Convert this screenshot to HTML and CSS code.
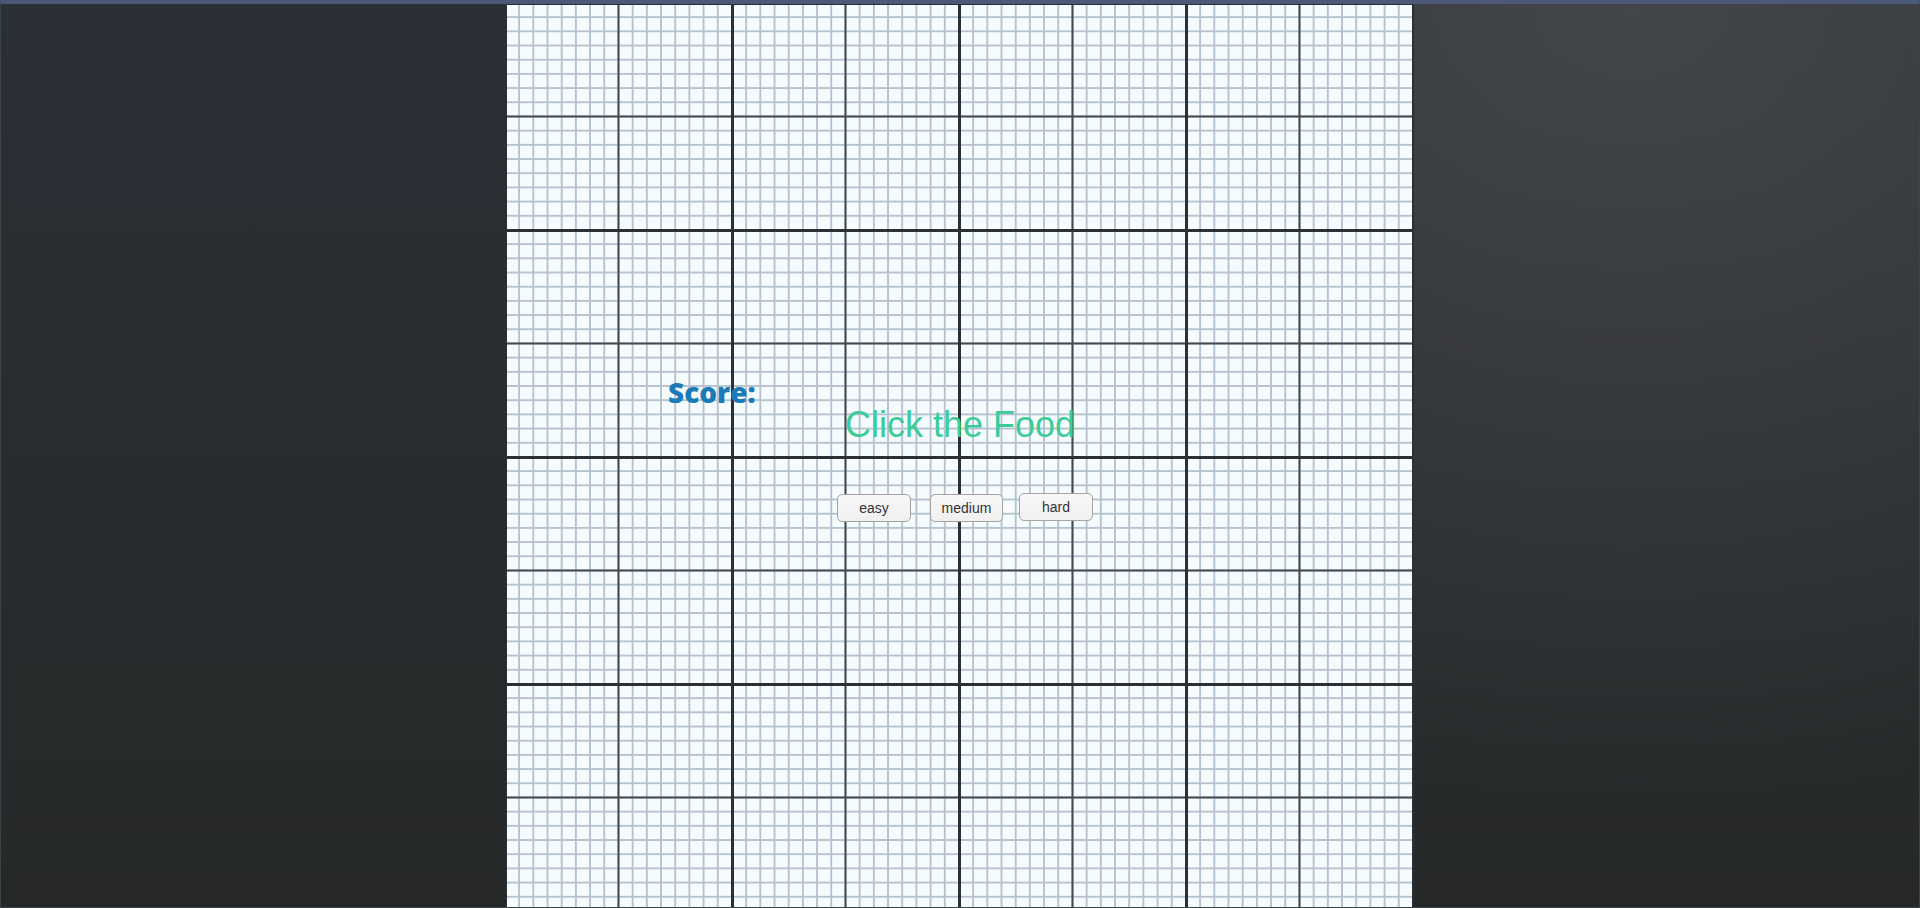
FILE: index.html
```html
<!DOCTYPE html>
<html lang="en">
<head>
<meta charset="utf-8">
<title>Click the Food</title>
<link rel="stylesheet" href="styles.css">
</head>
<body>
<div class="page">
  <main class="board">
    <div class="score">Score:</div>
    <h1 class="title">Click the Food</h1>
    <div class="levels">
      <button class="level level-easy">easy</button>
      <button class="level level-medium">medium</button>
      <button class="level level-hard">hard</button>
    </div>
  </main>
</div>
</body>
</html>
```

FILE: styles.css
```css
html, body {
  margin: 0;
  padding: 0;
  height: 100%;
  overflow: hidden;
}

.page {
  box-sizing: border-box;
  height: 908px;
  border: 1px solid #394646;
  border-top: 4px solid #4b5878;
  background:
    radial-gradient(ellipse 1000px 800px at 85% 0%, rgba(70, 72, 75, 0.9) 0%, rgba(70, 72, 75, 0) 100%),
    linear-gradient(to bottom, #2b2f36 0%, #292c2f 50%, #262828 100%);
  display: flex;
  justify-content: center;
  overflow: hidden;
}

.board {
  flex: none;
  width: 908px;
  height: 908px;
  background-color: #f6fcfd;
  background-image:
    linear-gradient(to right, #2c2f33 3px, transparent 3px),
    linear-gradient(to bottom, #2c2f33 3px, transparent 3px),
    linear-gradient(to right, #45494f 2px, transparent 2px),
    linear-gradient(to bottom, #45494f 2px, transparent 2px),
    linear-gradient(to right, #b4c3cf 1.5px, transparent 1.5px),
    linear-gradient(to bottom, #b4c3cf 1.5px, transparent 1.5px);
  background-size:
    227px 100%,
    100% 227px,
    113.5px 100%,
    100% 113.5px,
    14.1875px 100%,
    100% 14.1875px;
  background-position: -2px -2px;
  display: flex;
  flex-direction: column;
}

.score {
  margin: 374px 0 0 162px;
  font-family: "Open Sans", "Noto Sans", sans-serif;
  font-weight: 800;
  font-size: 28px;
  line-height: 28px;
  color: #1b7ab8;
}

.title {
  margin: 1px 0 0 0;
  text-align: center;
  font-family: "Liberation Sans", Arial, sans-serif;
  font-weight: 400;
  font-size: 36px;
  line-height: 36px;
  color: #3ccc9a;
}

.levels {
  display: flex;
  align-items: flex-start;
  margin: 51px 0 0 331px;
}

.level {
  box-sizing: border-box;
  width: 74px;
  height: 28px;
  padding: 0;
  border: 1px solid #a3a3a3;
  border-radius: 5px;
  background: linear-gradient(to bottom, #f8f8f8, #f0f0f0);
  font-family: "Liberation Sans", Arial, sans-serif;
  font-size: 14px;
  color: #333333;
}

.level-medium {
  width: 73px;
  margin-left: 19px;
}

.level-hard {
  margin-left: 16px;
  margin-top: -1px;
}
```
